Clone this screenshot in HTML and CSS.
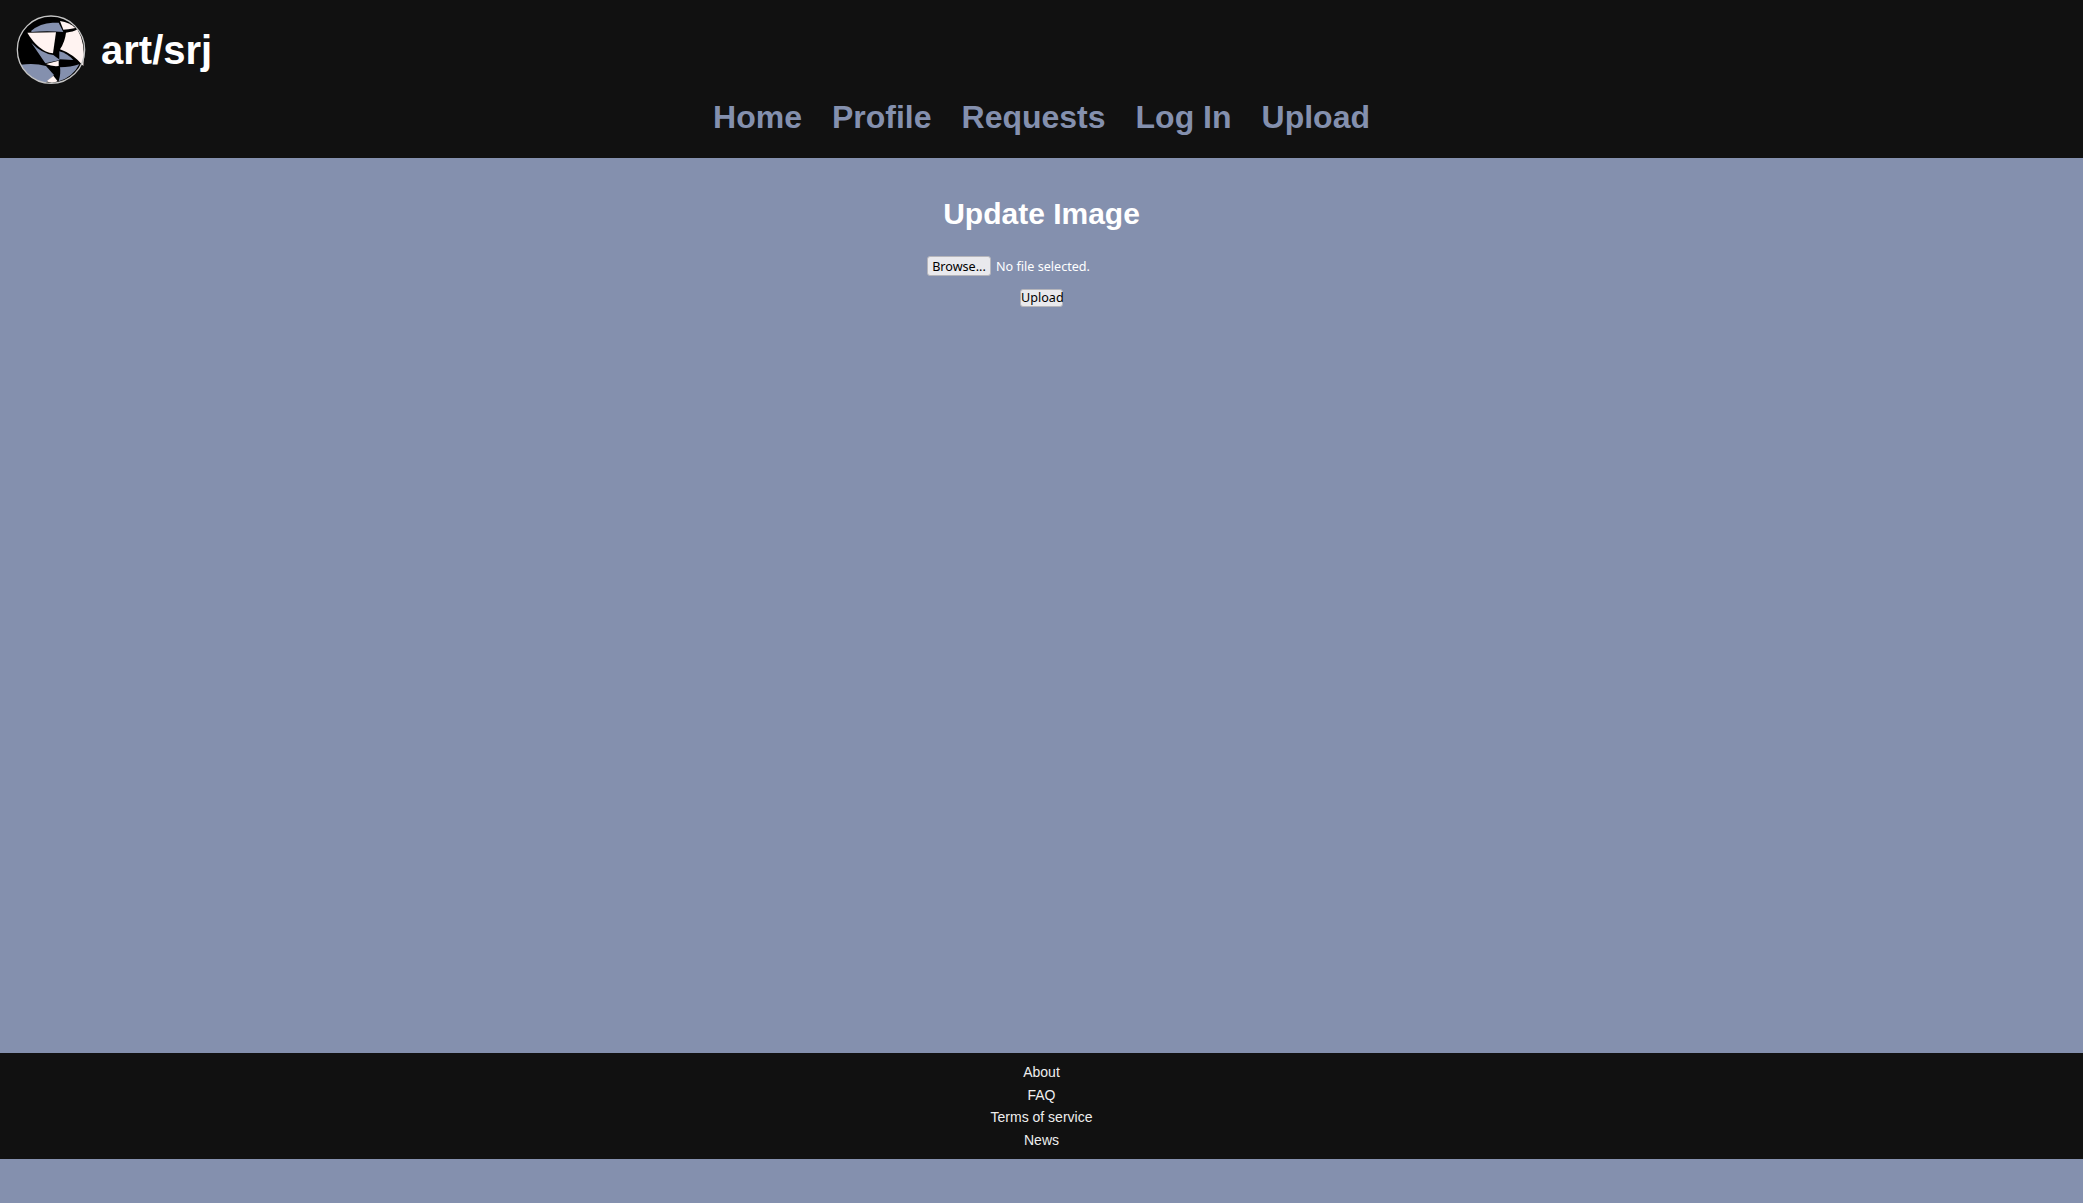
FILE: index.html
```html
<!DOCTYPE html>
<html lang="en">
<head>
<meta charset="utf-8">
<title>art/srj - Update Image</title>
<link rel="stylesheet" href="styles.css">
</head>
<body>
<header class="site-header">
  <a class="brand" href="#">
    <svg class="logo" viewBox="0 0 240 240" aria-hidden="true">
      <circle cx="123" cy="119" r="101" fill="#000"/>
      <path d="M64 62 Q90 40 128 38 L146 38 L160 66 Q110 62 64 66Z" fill="#8490ae"/>
      <path d="M150 33 Q180 38 196 54 Q172 59 160 59Z" fill="#fff3f1"/>
      <path d="M52 68 L138 67 L129 130 Q85 124 52 68Z" fill="#fff3f1"/>
      <path d="M64 98 Q95 130 130 135 L150 150 L106 160Z" fill="#8490ae"/>
      <path d="M168 68 Q190 66 202 58 Q228 100 220 168 Q190 132 150 118 Q165 95 168 68Z" fill="#fff3f1"/>
      <path d="M148 124 Q172 130 190 150 L148 148Z" fill="#8490ae"/>
      <path d="M108 162 L146 152 L146 168 Q125 170 108 162Z" fill="#fff3f1"/>
      <path d="M150 172 Q182 172 208 163 Q188 202 146 214 Q153 190 150 172Z" fill="#8490ae"/>
      <path d="M32 164 Q75 158 108 168 L132 195 L106 220 Q58 208 32 164Z" fill="#8490ae"/>
      <path d="M110 214 L130 197 L143 214 Q125 222 110 214Z" fill="#fff3f1"/>
      <circle cx="123" cy="119" r="101" fill="none" stroke="#c4c4c4" stroke-width="4"/>
    </svg>
    <span class="brand-name">art/srj</span>
  </a>
  <nav class="main-nav">
    <a href="#">Home</a>
    <a href="#">Profile</a>
    <a href="#">Requests</a>
    <a href="#">Log In</a>
    <a href="#">Upload</a>
  </nav>
</header>
<main class="content">
  <h1 class="title">Update Image</h1>
  <form class="upload-form">
    <div class="file-row">
      <button type="button" class="browse">Browse...</button>
      <span class="file-status">No file selected.</span>
    </div>
    <button type="button" class="submit">Upload</button>
  </form>
</main>
<footer class="site-footer">
  <a href="#">About</a>
  <a href="#">FAQ</a>
  <a href="#">Terms of service</a>
  <a href="#">News</a>
</footer>
</body>
</html>
```
FILE: styles.css
```css
html, body {
  margin: 0;
  padding: 0;
}
body {
  background: #8490ae;
  font-family: "Liberation Sans", Arial, sans-serif;
  color: #fff;
}
a {
  text-decoration: none;
  color: inherit;
}
.site-header {
  background: #111;
  height: 158px;
  box-sizing: border-box;
  padding: 10px 10px 0;
}
.brand {
  display: flex;
  align-items: center;
  gap: 11px;
  height: 80px;
}
.logo {
  width: 80px;
  height: 80px;
  display: block;
}
.brand-name {
  font-size: 40px;
  font-weight: 700;
}
.main-nav {
  display: flex;
  justify-content: center;
  gap: 30px;
  font-size: 32px;
  font-weight: 700;
  color: #8490ae;
  margin-top: 9px;
  line-height: 37px;
}
.content {
  height: 895px;
  box-sizing: border-box;
  padding-top: 39px;
  display: flex;
  flex-direction: column;
  align-items: center;
}
.title {
  margin: 0;
  font-size: 30px;
  line-height: 34px;
  font-weight: 700;
}
.upload-form {
  display: flex;
  flex-direction: column;
  align-items: center;
  margin-top: 25px;
  font-family: "Noto Sans", sans-serif;
  font-size: 12.6px;
}
.file-row {
  display: flex;
  align-items: center;
  gap: 5px;
  height: 20px;
  width: 229px;
}
.browse, .submit {
  font-family: "Noto Sans", sans-serif;
  font-size: 12.6px;
  color: #000;
  background: #e9e9ed;
  border: 1px solid #b5b5bb;
  border-radius: 3px;
  padding: 0;
  margin: 0;
}
.browse {
  width: 64px;
  height: 20px;
}
.submit {
  width: 43px;
  height: 18px;
  line-height: 16px;
  margin-top: 13px;
}
.file-status {
  color: #fff;
  white-space: nowrap;
}
.site-footer {
  background: #111;
  height: 106px;
  box-sizing: border-box;
  padding-top: 8px;
  display: flex;
  flex-direction: column;
  align-items: center;
  font-size: 14px;
  line-height: 22.6px;
  color: #eee;
}
```
